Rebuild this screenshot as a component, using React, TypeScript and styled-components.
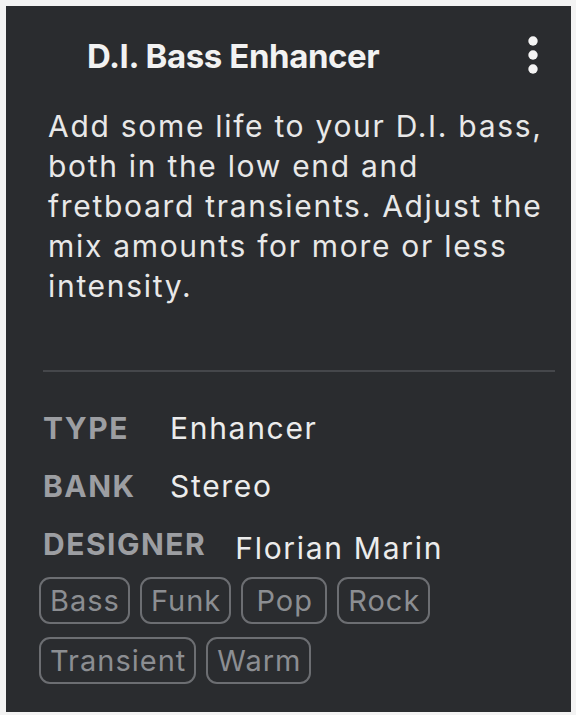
import React from "react";
import styled, { createGlobalStyle } from "styled-components";

const Global = createGlobalStyle`
  html, body { margin: 0; padding: 0; background: #f3f3f3; }
  body { font-family: Inter, "Noto Sans", sans-serif; -webkit-font-smoothing: antialiased; }
`;

const Page = styled.div`
  width: 576px;
  height: 715px;
  padding: 6px 5px 3px 6px;
  box-sizing: border-box;
`;

const Panel = styled.section`
  width: 100%;
  height: 100%;
  background: #2a2c2f;
  box-sizing: border-box;
  padding: 30px 0 0 37px;
  display: flex;
  flex-direction: column;
`;

const Header = styled.header`
  display: flex;
  align-items: center;
  justify-content: space-between;
  padding-left: 44px;
  height: 40px;
`;

const Title = styled.h1`
  margin: 0;
  font-size: 33px;
  line-height: 40px;
  font-weight: 700;
  color: #f2f2f2;
  letter-spacing: -0.4px;
`;

const MenuButton = styled.button`
  background: none;
  border: 0;
  padding: 0;
  width: 12px;
  height: 40px;
  margin-right: 32px;
  margin-top: -2px;
  display: flex;
  align-items: center;
  justify-content: center;
  cursor: pointer;
`;

const Description = styled.p`
  margin: 30px 0 0 5px;
  width: 505px;
  font-size: 30px;
  line-height: 40px;
  letter-spacing: 1.7px;
  color: #e8e8e8;
  font-weight: 400;
`;

const Divider = styled.hr`
  border: 0;
  height: 2px;
  background: #45474b;
  margin: 64px 0 0 0;
  width: 512px;
`;

const Meta = styled.dl`
  margin: 38px 0 0 0;
  display: flex;
  flex-direction: column;
  gap: 22px;
`;

const MetaRow = styled.div`
  display: flex;
  align-items: baseline;
  gap: 29px;
  line-height: 36px;
`;

const Label = styled.dt`
  min-width: 98px;
  font-size: 30px;
  font-weight: 700;
  color: #9c9ea2;
  letter-spacing: 1.5px;
`;

const Value = styled.dd<{ $drop?: number }>`
  margin: 0;
  font-size: 30px;
  letter-spacing: 1.7px;
  color: #ececec;
  position: relative;
  top: ${(p) => p.$drop ?? 0}px;
`;

const Tags = styled.div`
  margin: 15px 0 0 -4px;
  display: flex;
  flex-wrap: wrap;
  gap: 13px 10px;
  width: 420px;
`;

const Tag = styled.span`
  box-sizing: border-box;
  height: 47px;
  min-width: 86px;
  padding: 0 8px 0 9px;
  border: 2px solid #6c6e72;
  border-radius: 11px;
  display: inline-flex;
  align-items: center;
  justify-content: center;
  font-size: 29px;
  letter-spacing: 1px;
  color: #8c8e92;
`;

const Kebab = () => (
  <svg width="12" height="40" viewBox="0 0 12 40">
    <circle cx="6" cy="6" r="4.7" fill="#f4f4f4" />
    <circle cx="6" cy="20" r="4.7" fill="#f4f4f4" />
    <circle cx="6" cy="34" r="4.7" fill="#f4f4f4" />
  </svg>
);

const meta = [
  { label: "TYPE", value: "Enhancer" },
  { label: "BANK", value: "Stereo" },
  { label: "DESIGNER", value: "Florian Marin", drop: 4 },
];

const tags = ["Bass", "Funk", "Pop", "Rock", "Transient", "Warm"];

export default function App() {
  return (
    <>
      <Global />
      <Page>
        <Panel>
          <Header>
            <Title>D.I. Bass Enhancer</Title>
            <MenuButton aria-label="More options">
              <Kebab />
            </MenuButton>
          </Header>
          <Description>
            Add some life to your D.I. bass, both in the low end and fretboard
            transients. Adjust the mix amounts for more or less intensity.
          </Description>
          <Divider />
          <Meta>
            {meta.map((m) => (
              <MetaRow key={m.label}>
                <Label>{m.label}</Label>
                <Value $drop={m.drop}>{m.value}</Value>
              </MetaRow>
            ))}
          </Meta>
          <Tags>
            {tags.map((t) => (
              <Tag key={t}>{t}</Tag>
            ))}
          </Tags>
        </Panel>
      </Page>
    </>
  );
}
